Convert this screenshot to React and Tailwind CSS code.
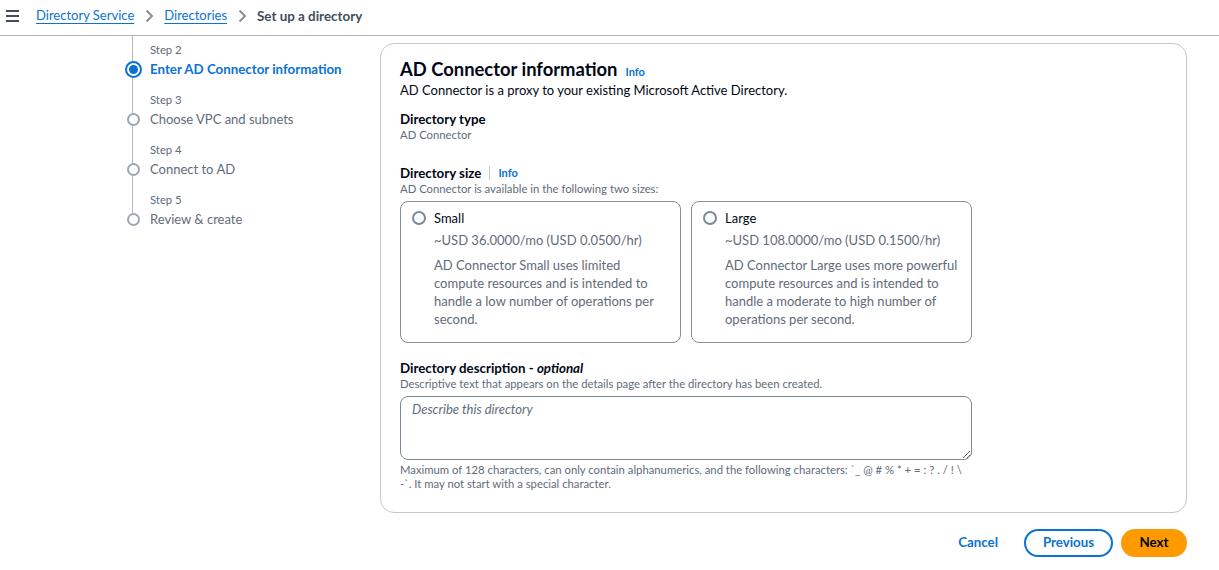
const steps = [
  { label: "Step 2", title: "Enter AD Connector information", active: true },
  { label: "Step 3", title: "Choose VPC and subnets" },
  { label: "Step 4", title: "Connect to AD" },
  { label: "Step 5", title: "Review & create" },
];

const sizes = [
  {
    name: "Small",
    price: "~USD 36.0000/mo (USD 0.0500/hr)",
    desc: "AD Connector Small uses limited compute resources and is intended to handle a low number of operations per second.",
  },
  {
    name: "Large",
    price: "~USD 108.0000/mo (USD 0.1500/hr)",
    desc: "AD Connector Large uses more powerful compute resources and is intended to handle a moderate to high number of operations per second.",
  },
];

const Chevron = () => (
  <svg width="16" height="16" viewBox="0 0 16 16" fill="none" className="mx-[7px]">
    <path d="M5.5 2.5l5.5 5.5-5.5 5.5" stroke="#8c8c94" strokeWidth="2" />
  </svg>
);

const App = () => {
  return (
    <div className="w-[1219px] h-[570px] bg-white text-[#000716] font-['Lato','Liberation_Sans',sans-serif] overflow-hidden">
      {/* Breadcrumbs */}
      <div className="h-[36px] flex items-center border-b border-[#b4b4bb]">
        <svg width="14" height="12" viewBox="0 0 14 12" className="ml-[6px] mr-[16px] -mt-[3px]">
          <path d="M0 1h13M0 6h13M0 11h13" stroke="#414d5c" strokeWidth="2" />
        </svg>
        <div className="flex items-center text-[13px] -mt-[3px]">
          <a className="text-[#0972d3] underline underline-offset-[3px]">Directory Service</a>
          <Chevron />
          <a className="text-[#0972d3] underline underline-offset-[3px]">Directories</a>
          <Chevron />
          <span className="font-bold text-[13.4px] text-[#414d5c]">Set up a directory</span>
        </div>
      </div>

      <div className="flex">
        {/* Steps */}
        <div className="w-[380px] pl-[125px] relative">
          <div className="absolute left-[132px] top-0 h-[186px] w-px bg-[#b4b4bb]"></div>
          {steps.map((s) => (
            <div key={s.label} className="h-[50px] pt-[7px] relative">
              <div className="text-[11.3px] text-[#5f6b7a] pl-[25px] leading-[14px]">{s.label}</div>
              <div className="flex items-center mt-[3px]">
                <div className="w-[17px] flex justify-center bg-white">
                  {s.active ? (
                    <div className="w-[17px] h-[17px] rounded-full border-2 border-[#0972d3] bg-white flex items-center justify-center">
                      <div className="w-[9px] h-[9px] rounded-full bg-[#0972d3]"></div>
                    </div>
                  ) : (
                    <div className="w-[13px] h-[13px] rounded-full border-2 border-[#9ba7b6] bg-white"></div>
                  )}
                </div>
                <div
                  className={
                    "ml-[8px] leading-[18px] " +
                    (s.active ? "text-[13.3px] font-bold text-[#0972d3]" : "text-[13px] text-[#5f6b7a]")
                  }
                >
                  {s.title}
                </div>
              </div>
            </div>
          ))}
        </div>

        {/* Card */}
        <div className="mt-[7px] w-[807px] h-[470px] rounded-[14px] border border-[#c6c6cd] px-[19px] pt-[14px]">
          <div className="flex items-baseline">
            <h2 className="text-[18.4px] font-bold leading-[22px]">AD Connector information</h2>
            <a className="ml-[8px] text-[11px] font-bold text-[#0972d3]">Info</a>
          </div>
          <p className="text-[13px] leading-[18px]">
            AD Connector is a proxy to your existing Microsoft Active Directory.
          </p>

          <div className="mt-[11px] text-[13.3px] font-bold leading-[18px]">Directory type</div>
          <div className="text-[11.3px] text-[#5f6b7a] leading-[14px]">AD Connector</div>

          <div className="mt-[22px] flex items-center leading-[18px]">
            <span className="text-[13.3px] font-bold">Directory size</span>
            <span className="mx-[8px] h-[14px] w-px bg-[#c6c6cd]"></span>
            <a className="text-[11px] font-bold text-[#0972d3]">Info</a>
          </div>
          <div className="text-[11.3px] text-[#5f6b7a] leading-[14px]">
            AD Connector is available in the following two sizes:
          </div>

          <div className="mt-[5px] flex gap-[10px] w-[572px]">
            {sizes.map((z) => (
              <div key={z.name} className="flex-1 h-[142px] rounded-[8px] border border-[#8c8c94] pl-[11px] pr-[10px] pt-[7px]">
                <div className="flex items-center">
                  <div className="w-[14px] h-[14px] rounded-full border-2 border-[#7d8998]"></div>
                  <span className="ml-[8px] text-[13px] leading-[18px]">{z.name}</span>
                </div>
                <div className="pl-[22px]">
                  <div className="text-[13px] leading-[18px] text-[#5f6b7a] mt-[4px]">{z.price}</div>
                  <div className="text-[13px] leading-[18px] text-[#5f6b7a] mt-[7px]">{z.desc}</div>
                </div>
              </div>
            ))}
          </div>

          <div className="mt-[16px] text-[13.3px] font-bold leading-[18px]">
            Directory description - <i>optional</i>
          </div>
          <div className="text-[11.3px] text-[#5f6b7a] leading-[14px]">
            Descriptive text that appears on the details page after the directory has been created.
          </div>
          <textarea
            className="mt-[5px] block w-[572px] h-[64px] rounded-[8px] border border-[#7d8998] px-[11px] py-[3px] text-[13px] italic placeholder:text-[#5f6b7a] outline-none"
            placeholder="Describe this directory"
          ></textarea>
          <div className="mt-[3px] w-[572px] text-[11.3px] text-[#5f6b7a] leading-[14px]">
            Maximum of 128 characters, can only contain alphanumerics, and the following characters: `_ @ # % * + = : ? . / ! \{" "}
            <span className="whitespace-nowrap">-`.</span> It may not start with a special character.
          </div>
        </div>
      </div>

      {/* Actions */}
      <div className="mt-[16px] flex justify-end items-center pr-[32px]">
        <a className="text-[13.3px] font-bold text-[#0972d3] mr-[26px]">Cancel</a>
        <button className="h-[28px] w-[89px] rounded-full border-2 border-[#0972d3] text-[13.3px] font-bold text-[#0972d3]">
          Previous
        </button>
        <button className="ml-[8px] h-[28px] w-[66px] rounded-full bg-[#ff9900] text-[13.3px] font-bold text-[#000716]">
          Next
        </button>
      </div>
    </div>
  );
};

export default App;
